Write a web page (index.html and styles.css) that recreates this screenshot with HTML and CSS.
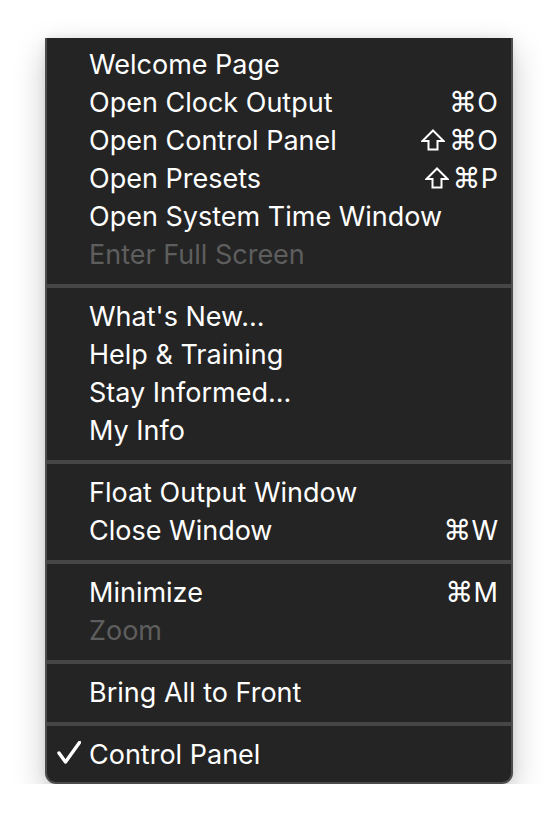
FILE: index.html
```html
<!doctype html>
<html lang="en">
<head>
    <meta charset="UTF-8">
    <link rel="stylesheet" href="styles.css">
    <title>Window Menu</title>
</head>
<body>
    <div class="menu">
        <div class="item"><span class="label">Welcome Page</span></div>
        <div class="item">
            <span class="label">Open Clock Output</span>
            <span class="keys"><span class="cmd">⌘</span>O</span>
        </div>
        <div class="item">
            <span class="label">Open Control Panel</span>
            <span class="keys">
                <svg class="shift" width="24" height="22" viewBox="0 0 24 22"><path d="M12 1.5 L22.5 12 L16.5 12 L16.5 20.5 L7.5 20.5 L7.5 12 L1.5 12 Z" fill="none" stroke="#fff" stroke-width="2" stroke-linejoin="miter"/></svg>
                <span class="cmd">⌘</span>O
            </span>
        </div>
        <div class="item">
            <span class="label">Open Presets</span>
            <span class="keys">
                <svg class="shift" width="24" height="22" viewBox="0 0 24 22"><path d="M12 1.5 L22.5 12 L16.5 12 L16.5 20.5 L7.5 20.5 L7.5 12 L1.5 12 Z" fill="none" stroke="#fff" stroke-width="2" stroke-linejoin="miter"/></svg>
                <span class="cmd">⌘</span>P
            </span>
        </div>
        <div class="item"><span class="label">Open System Time Window</span></div>
        <div class="item disabled"><span class="label">Enter Full Screen</span></div>

        <div class="separator"></div>

        <div class="item"><span class="label">What's New...</span></div>
        <div class="item"><span class="label">Help &amp; Training</span></div>
        <div class="item"><span class="label">Stay Informed...</span></div>
        <div class="item"><span class="label">My Info</span></div>

        <div class="separator"></div>

        <div class="item"><span class="label">Float Output Window</span></div>
        <div class="item">
            <span class="label">Close Window</span>
            <span class="keys"><span class="cmd">⌘</span>W</span>
        </div>

        <div class="separator"></div>

        <div class="item">
            <span class="label">Minimize</span>
            <span class="keys"><span class="cmd">⌘</span>M</span>
        </div>
        <div class="item disabled"><span class="label">Zoom</span></div>

        <div class="separator"></div>

        <div class="item"><span class="label">Bring All to Front</span></div>

        <div class="separator"></div>

        <!-- checked window -->
        <div class="item checked">
            <svg class="check" width="24" height="24" viewBox="0 0 24 24">
                <path d="M2 12 L8.5 21 L22.5 1.5" fill="none" stroke="#fff" stroke-width="3.4" stroke-linecap="round" stroke-linejoin="round"/>
            </svg>
            <span class="label">Control Panel</span>
        </div>
    </div>
</body>
</html>
```

FILE: styles.css
```css
body {
    margin: 0;
    background-color: #ffffff;
    font-family: Inter, "Noto Sans", sans-serif;
}

.menu {
    margin: 38px 0 0 45px;
    width: 464px;
    padding: 8px 0;
    background-color: #242424;
    border: 2px solid #4c4c4c;
    border-top: none;
    border-radius: 0 0 11px 11px;
    box-shadow: 0 12px 32px rgba(0, 0, 0, 0.22), 0 0 10px rgba(0, 0, 0, 0.08);
}

.item {
    position: relative;
    box-sizing: border-box;
    display: flex;
    align-items: center;
    justify-content: space-between;
    height: 38px;
    padding: 0 13px 2px 42px;
    color: #ffffff;
    font-size: 27px;
}

.item.disabled {
    color: #5e5e5e;
}

.keys {
    display: flex;
    align-items: center;
}

.cmd {
    font-family: "DejaVu Sans", sans-serif;
    font-size: 28px;
}

.shift {
    display: block;
    margin-right: 4px;
}

.check {
    position: absolute;
    left: 10px;
    top: 5px;
}

.separator {
    height: 4px;
    margin: 10px 0;
    background-color: #464646;
}
```
